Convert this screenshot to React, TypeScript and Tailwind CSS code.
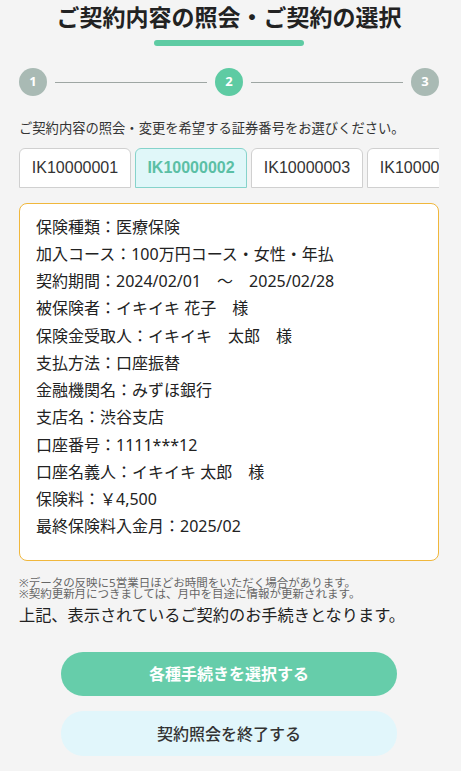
import React, { useState } from "react";

const policies = ["IK10000001", "IK10000002", "IK10000003", "IK10000004"];

const details = [
  "保険種類：医療保険",
  "加入コース：100万円コース・女性・年払",
  "契約期間：2024/02/01　～　2025/02/28",
  "被保険者：イキイキ 花子　様",
  "保険金受取人：イキイキ　太郎　様",
  "支払方法：口座振替",
  "金融機関名：みずほ銀行",
  "支店名：渋谷支店",
  "口座番号：1111***12",
  "口座名義人：イキイキ 太郎　様",
  "保険料：￥4,500",
  "最終保険料入金月：2025/02",
];

function StepCircle({ n, active }: { n: number; active?: boolean }) {
  return (
    <div
      className={`w-7 h-7 shrink-0 rounded-full flex items-center justify-center text-white text-[13px] font-bold ${
        active ? "bg-[#5ecba3]" : "bg-[#a9bab4]"
      }`}
    >
      {n}
    </div>
  );
}

export default function App() {
  const [selected, setSelected] = useState(1);

  return (
    <div
      className="min-h-screen bg-[#f4f4f4] text-[#222] pl-[19px] pr-[22px]"
      style={{ fontFamily: '"Noto Sans", "Noto Sans CJK JP", sans-serif' }}
    >
      <h1 className="text-center text-[23px] leading-[34px] font-bold text-[#222]">
        ご契約内容の照会・ご契約の選択
      </h1>
      <div className="mx-auto mt-[6px] h-[6px] w-[150px] rounded-full bg-[#5ecba3]" />

      {/* steps */}
      <div className="mt-[22px] flex items-center">
        <StepCircle n={1} />
        <div className="mx-2 h-px flex-1 bg-[#9ea6a3]" />
        <StepCircle n={2} active />
        <div className="mx-2 h-px flex-1 bg-[#9ea6a3]" />
        <StepCircle n={3} />
      </div>

      <p className="mt-[22px] text-[13.3px] leading-[20px] text-[#333]">
        ご契約内容の照会・変更を希望する証券番号をお選びください。
      </p>

      <div className="mt-[10px] flex gap-1 overflow-hidden">
        {policies.map((p, i) => (
          <button
            key={p}
            onClick={() => setSelected(i)}
            className={`h-10 w-[112px] shrink-0 rounded-t-md border font-['Liberation_Sans',sans-serif] text-[16px] ${
              selected === i
                ? "border-[#86d3cb] bg-[#e0f7f9] font-bold text-[#5bbfa5]"
                : "border-[#d0d0d0] bg-white text-[#333]"
            }`}
          >
            {p}
          </button>
        ))}
      </div>

      <div className="mt-[15px] rounded-lg border border-[#f0b73c] bg-white pl-4 pr-4 pt-[9.5px] pb-[19.5px]">
        {details.map((d) => (
          <p key={d} className="text-[16px] leading-[27.25px] text-[#222] whitespace-pre">
            {d}
          </p>
        ))}
      </div>

      <div className="mt-[16px] text-[11.5px] leading-[11px] text-[#666]">
        <p>※データの反映に5営業日ほどお時間をいただく場合があります。</p>
        <p>※契約更新月につきましては、月中を目途に情報が更新されます。</p>
      </div>

      <p className="mt-[4px] text-[16.2px] leading-[24px] text-[#222]">
        上記、表示されているご契約のお手続きとなります。
      </p>

      <div className="mt-[25px] flex flex-col items-center gap-[15px] pb-4">
        <button className="h-11 w-[336px] rounded-[22px] bg-[#66cdaa] text-[16px] font-bold text-white">
          各種手続きを選択する
        </button>
        <button className="h-[45px] w-[336px] rounded-[22px] bg-[#e1f6fb] text-[16px] font-medium text-[#333]">
          契約照会を終了する
        </button>
      </div>
    </div>
  );
}
